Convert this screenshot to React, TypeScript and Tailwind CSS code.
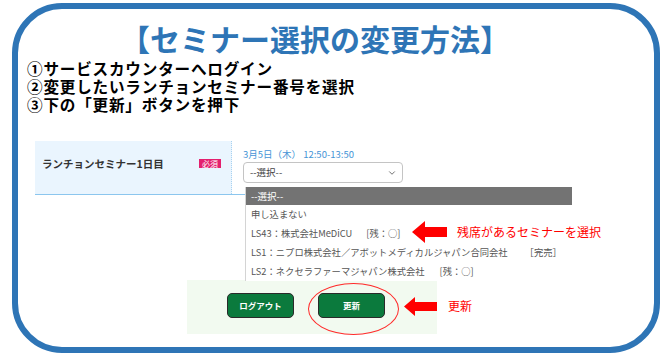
import { ChevronDown } from 'lucide-react';

const jp = { fontFamily: '"Noto Sans CJK JP", "Noto Sans", sans-serif' };

function LeftArrow({ w, h }: { w: number; h: number }) {
  const head = Math.round(h * 0.6);
  const shaftTop = Math.round(h * 0.27);
  const shaftBottom = h - shaftTop;
  return (
    <svg width={w} height={h} viewBox={`0 0 ${w} ${h}`}>
      <polygon
        points={`0,${h / 2} ${head},0 ${head},${shaftTop} ${w},${shaftTop} ${w},${shaftBottom} ${head},${shaftBottom} ${head},${h}`}
        fill="#ff0000"
      />
    </svg>
  );
}

const options = [
  { label: '申し込まない', tag: '', gap: '' },
  { label: 'LS43：株式会社MeDiCU', tag: '[残：○]', gap: 'ml-[14px]' },
  { label: 'LS1：ニプロ株式会社／アボットメディカルジャパン合同会社', tag: '［完売］', gap: 'ml-[17px]' },
  { label: 'LS2：ネクセラファーマジャパン株式会社', tag: '[残：○]', gap: 'ml-[15px]' },
];

export default function App() {
  return (
    <div className="w-[670px] h-[357px] bg-white overflow-hidden" style={jp}>
      <div className="ml-[12px] mt-[3px] w-[648px] h-[350px] border-[6px] border-[#2e75b6] rounded-[50px] flex flex-col">
        {/* title */}
        <h1 className="mt-[11px] pl-[102px] text-[30px] leading-[36px] font-bold text-[#2e75b6] whitespace-nowrap">
          【セミナー選択の変更方法】
        </h1>

        {/* steps */}
        <div className="mt-[3px] pl-[9px] text-[15.6px] tracking-[0.8px] leading-[18px] font-bold text-black whitespace-nowrap">
          <p>①サービスカウンターへログイン</p>
          <p>②変更したいランチョンセミナー番号を選択</p>
          <p>③下の「更新」ボタンを押下</p>
        </div>

        {/* captured form */}
        <div className="relative mt-[28px] ml-[17px] w-[580px] h-[196px]">
          <div className="flex w-[300px] border-b-[1.5px] border-[#8cc6ee]">
            <div className="shrink-0 w-[197px] h-[53px] bg-[#eaf5fe] border-r border-dotted border-[#a8d2f0] flex items-center justify-between pl-[7px] pr-[10px] pb-[8px]">
              <span className="text-[10.5px] font-bold text-[#333] whitespace-nowrap">ランチョンセミナー1日目</span>
              <span className="bg-[#e4206e] text-white text-[8px] leading-[9px] px-[3px] whitespace-nowrap">必須</span>
            </div>
            <div className="shrink-0 pl-[11px] pt-[7px]">
              <p className="text-[9.5px] leading-[12px] text-[#4694d6] whitespace-nowrap">3月5日（木） 12:50-13:50</p>
              <div className="mt-[2px] w-[160px] h-[21px] border border-[#c4c4c4] rounded-[4px] bg-white flex items-center justify-between pl-[6px] pr-[5px]">
                <span className="text-[9.5px] text-[#444]">--選択--</span>
                <ChevronDown size={10} strokeWidth={2} className="text-[#555]" />
              </div>
            </div>
          </div>

          <div className="mt-[85px] ml-[152px] w-[250px] h-[54px] bg-[#f2faf0] flex items-start gap-[24px] pl-[40px] pt-[13px]">
            <button className="w-[67px] h-[25px] bg-[#0b7a3d] border border-[#2a2a2a] rounded-[5px] text-white text-[8.5px] font-bold">
              ログアウト
            </button>
            <button className="w-[67px] h-[25px] bg-[#0b7a3d] border border-[#2a2a2a] rounded-[5px] text-white text-[8.5px] font-bold">
              更新
            </button>
          </div>

          {/* open dropdown */}
          <div className="absolute left-[210px] top-[46px] w-[327px] bg-white border-l border-[#d4d4d4]">
            <div className="h-[18px] bg-[#737373] text-white text-[9.5px] leading-[18px] pl-[5px]">--選択--</div>
            {options.map((o) => (
              <div key={o.label} className="h-[19px] flex items-center pl-[5px] text-[9.3px] text-[#555] whitespace-nowrap">
                <span>{o.label}</span>
                {o.tag && <span className={o.gap}>{o.tag}</span>}
              </div>
            ))}
          </div>

          {/* annotations */}
          <div className="absolute left-[377px] top-[80px]">
            <LeftArrow w={35} h={22} />
          </div>
          <p className="absolute left-[422px] top-[83px] text-[12px] leading-[16px] text-[#ff0000] whitespace-nowrap">
            残席があるセミナーを選択
          </p>
          <div className="absolute left-[273px] top-[142px] w-[91px] h-[52px] rounded-[50%] border border-[#ff2a2a]" />
          <div className="absolute left-[369px] top-[156px]">
            <LeftArrow w={33} h={19} />
          </div>
          <p className="absolute left-[413px] top-[157px] text-[12px] leading-[16px] text-[#ff0000]">更新</p>
        </div>
      </div>
    </div>
  );
}
